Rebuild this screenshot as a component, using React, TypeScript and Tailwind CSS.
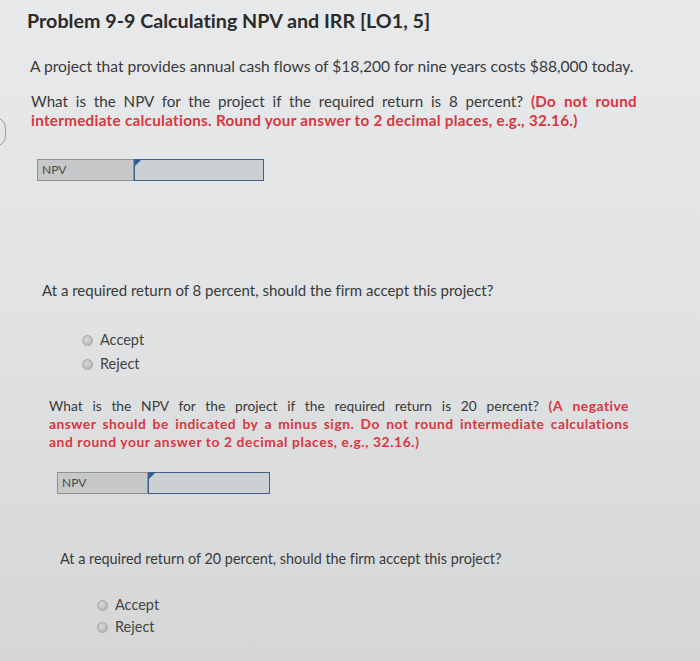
import React from "react";

const font = { fontFamily: "Lato, 'Open Sans', sans-serif" };

function NpvField({ labelW, inputW }: { labelW: string; inputW: string }) {
  return (
    <div className="flex h-[22px]">
      <div className={`${labelW} h-full border border-[#8f9295] bg-[#c6c8c9] px-1 text-[12px] leading-[20px] text-[#4a4a4a]`}>NPV</div>
      <div className={`${inputW} relative h-full border-[1.5px] border-[#40608c] bg-[#cdd0d2]`}>
        <div className="absolute left-0 top-0 h-0 w-0 border-l-[3px] border-t-[3px] border-r-[3px] border-b-[3px] border-l-[#2f5d9a] border-t-[#2f5d9a] border-r-transparent border-b-transparent" />
      </div>
    </div>
  );
}

function Radio({ label, lh }: { label: string; lh: string }) {
  return (
    <div className="flex items-center gap-[7px]">
      <span className="h-[11px] w-[11px] rounded-full border border-[#a5a7a8] bg-[radial-gradient(circle_at_40%_35%,#d8d9da,#a9abac)]" />
      <span className={`text-[14.5px] ${lh} text-[#444]`}>{label}</span>
    </div>
  );
}

export default function App() {
  return (
    <div
      style={font}
      className="relative h-[661px] w-[700px] overflow-hidden bg-[linear-gradient(180deg,#e7e9eb_0%,#e1e3e4_45%,#d5d6d6_100%)] text-[#3a3a3a] [font-variant-ligatures:none]"
    >
      <div className="absolute left-[-16px] top-[117px] h-[30px] w-[22px] rounded-full border-[1.5px] border-[#9a9c9d]" />
      <div className="flex flex-col">
        <h1 className="ml-[27px] mt-[8px] text-[19.7px] font-bold leading-[26px] text-[#2b2b2b]">
          Problem 9-9 Calculating NPV and IRR [LO1, 5]
        </h1>
        <p className="ml-[30px] mt-[22px] text-[15.6px] leading-[20px]">
          A project that provides annual cash flows of $18,200 for nine years costs $88,000 today.
        </p>
        <div className="ml-[31px] mt-[16px] w-[606px] text-[15.2px] leading-[19px]">
          <div className="[text-align:justify] [text-align-last:justify]">
            What is the NPV for the project if the required return is 8 percent?{" "}
            <span className="font-bold tracking-[0.3px] text-[#d9363f]">(Do not round</span>
          </div>
          <div className="font-bold tracking-[0.3px] text-[#d9363f]">
            intermediate calculations. Round your answer to 2 decimal places, e.g., 32.16.)
          </div>
        </div>
        <div className="ml-[37px] mt-[29px]">
          <NpvField labelW="w-[97px]" inputW="w-[130px]" />
        </div>
        <p className="ml-[42px] mt-[99px] text-[15px] leading-[20px]">
          At a required return of 8 percent, should the firm accept this project?
        </p>
        <div className="ml-[82px] mt-[28px] flex flex-col">
          <Radio label="Accept" lh="leading-[24px]" />
          <Radio label="Reject" lh="leading-[24px]" />
        </div>
        <div className="ml-[49px] mt-[21px] w-[580px] text-[13.8px] leading-[18px]">
          <div className="[text-align:justify] [text-align-last:justify]">
            What is the NPV for the project if the required return is 20 percent?{" "}
            <span className="font-bold tracking-[0.5px] text-[#d9363f]">(A negative</span>
          </div>
          <div className="font-bold tracking-[0.5px] text-[#d9363f] [text-align:justify] [text-align-last:justify]">
            answer should be indicated by a minus sign. Do not round intermediate calculations
          </div>
          <div className="font-bold tracking-[0.6px] text-[#d9363f]">
            and round your answer to 2 decimal places, e.g., 32.16.)
          </div>
        </div>
        <div className="ml-[57px] mt-[21px]">
          <NpvField labelW="w-[91px]" inputW="w-[122px]" />
        </div>
        <p className="ml-[60px] mt-[55px] text-[14.4px] leading-[20px]">
          At a required return of 20 percent, should the firm accept this project?
        </p>
        <div className="ml-[97px] mt-[25px] flex flex-col">
          <Radio label="Accept" lh="leading-[22px]" />
          <Radio label="Reject" lh="leading-[22px]" />
        </div>
      </div>
    </div>
  );
}
